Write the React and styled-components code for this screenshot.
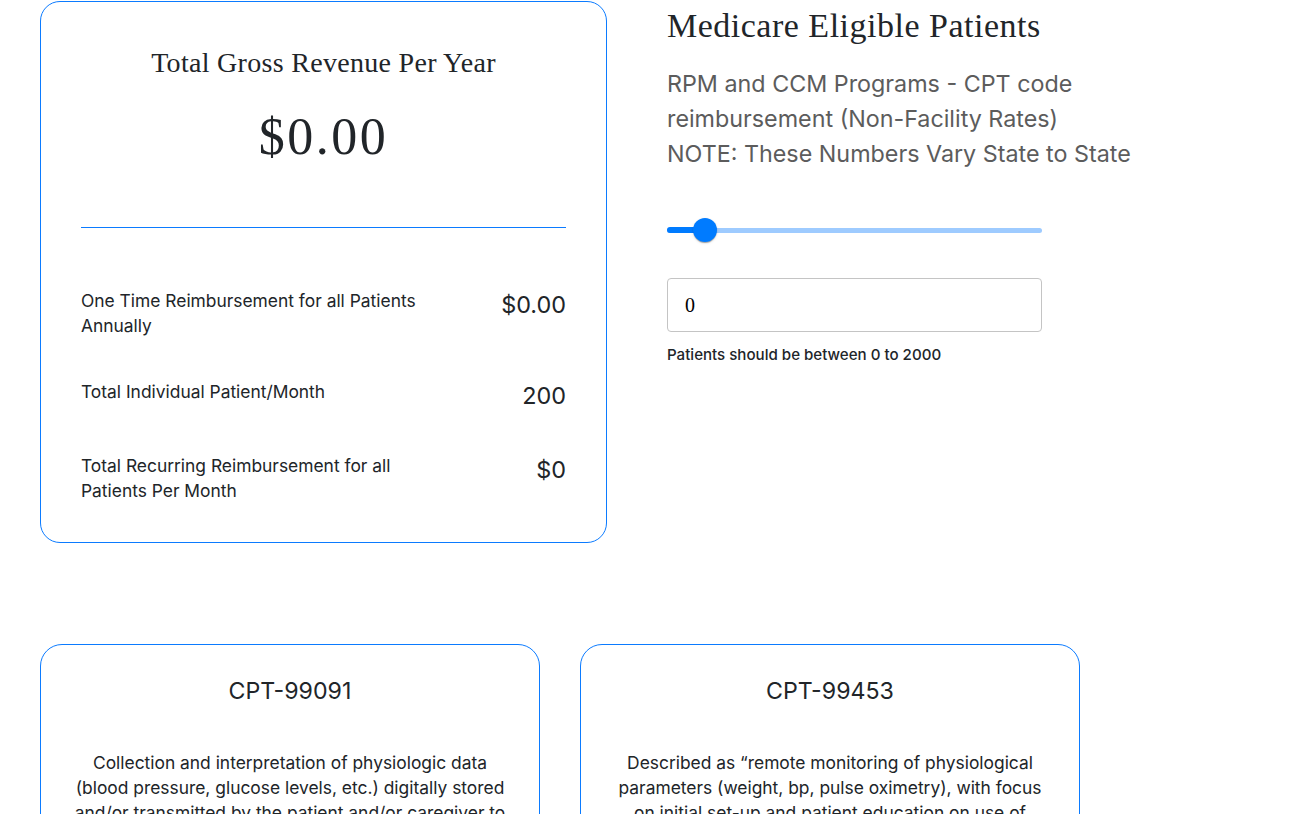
import React from "react";
import styled, { createGlobalStyle } from "styled-components";

const GlobalStyle = createGlobalStyle`
  html {
    overflow-y: scroll;
  }
  body {
    margin: 0;
    background: #ffffff;
    font-family: Inter, "Noto Sans", sans-serif;
    color: #212529;
  }
`;

const codes = [
  {
    code: "CPT-99091",
    desc: "Collection and interpretation of physiologic data (blood pressure, glucose levels, etc.) digitally stored and/or transmitted by the patient and/or caregiver to the physician or other qualified health care professional, requiring a minimum of 30 minutes of time.",
  },
  {
    code: "CPT-99453",
    desc: "Described as \u201cremote monitoring of physiological parameters (weight, bp, pulse oximetry), with focus on initial set-up and patient education on use of equipment.\u201d",
  },
  {
    code: "CPT-99454",
    desc: "Device supply with daily recordings or programmed alerts transmission, each 30 days.",
  },
  {
    code: "CPT-99457",
    desc: "Remote physiologic monitoring treatment management services, first 20 minutes of clinical staff time in a calendar month.",
  },
];

function App() {
  const patients = 0;
  const sliderPos = 10;

  return (
    <>
      <GlobalStyle />
      <Page>
        <TopSection>
          <RevenueCard>
            <RevenueTitle>Total Gross Revenue Per Year</RevenueTitle>
            <RevenueAmount>$0.00</RevenueAmount>
            <Divider />
            <Rows>
              <Row>
                <RowLabel>One Time Reimbursement for all Patients Annually</RowLabel>
                <RowValue>$0.00</RowValue>
              </Row>
              <Row>
                <RowLabel>Total Individual Patient/Month</RowLabel>
                <RowValue>200</RowValue>
              </Row>
              <Row>
                <RowLabel>Total Recurring Reimbursement for all Patients Per Month</RowLabel>
                <RowValue>$0</RowValue>
              </Row>
            </Rows>
          </RevenueCard>

          <Controls>
            <Heading>Medicare Eligible Patients</Heading>
            <Intro>
              RPM and CCM Programs - CPT code reimbursement (Non-Facility Rates)
              <br />
              NOTE: These Numbers Vary State to State
            </Intro>
            <Slider>
              <Rail />
              <Fill style={{ width: `${sliderPos}%` }} />
              <Thumb style={{ left: `${sliderPos}%` }} />
            </Slider>
            <NumberInput type="text" defaultValue={patients} />
            <Helper>Patients should be between 0 to 2000</Helper>
          </Controls>
        </TopSection>

        <CodeGrid>
          {codes.map((c) => (
            <CodeCard key={c.code}>
              <CodeTitle>{c.code}</CodeTitle>
              <CodeDesc>{c.desc}</CodeDesc>
            </CodeCard>
          ))}
        </CodeGrid>
      </Page>
    </>
  );
}

const Page = styled.div`
  padding: 1px 40px 60px 40px;
`;

/* top */
const TopSection = styled.div`
  display: flex;
  align-items: flex-start;
  gap: 60px;
`;

const RevenueCard = styled.div`
  box-sizing: border-box;
  width: 567px;
  border: 1px solid #0b7bff;
  border-radius: 20px;
  padding: 44px 40px 39px;
`;

const RevenueTitle = styled.div`
  font-family: "Liberation Serif", "DejaVu Serif", serif;
  font-size: 28px;
  letter-spacing: 0.3px;
  line-height: 34px;
  text-align: center;
  color: #212529;
`;

const RevenueAmount = styled.div`
  font-family: "Liberation Serif", "DejaVu Serif", serif;
  font-size: 52px;
  letter-spacing: 2.5px;
  line-height: 60px;
  margin-top: 27px;
  text-align: center;
  color: #212529;
`;

const Divider = styled.div`
  height: 1px;
  background: #0b7bff;
  margin-top: 60px;
`;

const Rows = styled.div`
  display: flex;
  flex-direction: column;
  gap: 41px;
  margin-top: 60px;
`;

const Row = styled.div`
  display: flex;
  justify-content: space-between;
  align-items: flex-start;
`;

const RowLabel = styled.div`
  width: 350px;
  font-size: 17.4px;
  line-height: 25px;
`;

const RowValue = styled.div`
  font-size: 23.4px;
  line-height: 33px;
  text-align: right;
`;

/* controls */
const Controls = styled.div`
  width: 480px;
`;

const Heading = styled.h2`
  margin: 6px 0 0;
  font-family: "Liberation Serif", "DejaVu Serif", serif;
  font-weight: 400;
  font-size: 34px;
  letter-spacing: 0.5px;
  line-height: 37px;
  color: #212529;
`;

const Intro = styled.p`
  margin: 22px 0 0;
  font-size: 23.3px;
  line-height: 35px;
  color: #5c5c5c;
`;

const Slider = styled.div`
  position: relative;
  width: 375px;
  height: 24px;
  margin-top: 47px;
`;

const Rail = styled.div`
  position: absolute;
  left: 0;
  right: 0;
  top: 9.5px;
  height: 5px;
  border-radius: 3px;
  background: #9ecbff;
`;

const Fill = styled.div`
  position: absolute;
  left: 0;
  top: 9px;
  height: 6px;
  border-radius: 3px;
  background: #007bff;
`;

const Thumb = styled.div`
  position: absolute;
  top: 0;
  width: 24px;
  height: 24px;
  margin-left: -12px;
  border-radius: 50%;
  background: #007bff;
  box-shadow: 0 2px 1px -1px rgba(0, 0, 0, 0.2), 0 1px 1px 0 rgba(0, 0, 0, 0.14),
    0 1px 3px 0 rgba(0, 0, 0, 0.12);
`;

const NumberInput = styled.input`
  display: block;
  box-sizing: border-box;
  width: 375px;
  height: 54px;
  margin-top: 36px;
  padding: 0 17px;
  border: 1px solid #c4c4c4;
  border-radius: 4px;
  font-family: "Liberation Serif", "DejaVu Serif", serif;
  font-size: 20px;
  color: #000;
  outline: none;
`;

const Helper = styled.div`
  margin-top: 12px;
  font-size: 15.1px;
  font-weight: 500;
  line-height: 21px;
  color: #212529;
`;

/* codes */
const CodeGrid = styled.div`
  display: flex;
  flex-wrap: wrap;
  gap: 40px;
  width: 1040px;
  margin-top: 101px;
`;

const CodeCard = styled.div`
  box-sizing: border-box;
  width: 500px;
  border: 1px solid #0b7bff;
  border-radius: 22px;
  padding: 30px 30px 40px;
`;

const CodeTitle = styled.div`
  font-size: 23.2px;
  line-height: 33px;
  text-align: center;
`;

const CodeDesc = styled.p`
  margin: 42px 0 0;
  font-size: 17.4px;
  line-height: 25px;
  text-align: center;
`;

export default App;
